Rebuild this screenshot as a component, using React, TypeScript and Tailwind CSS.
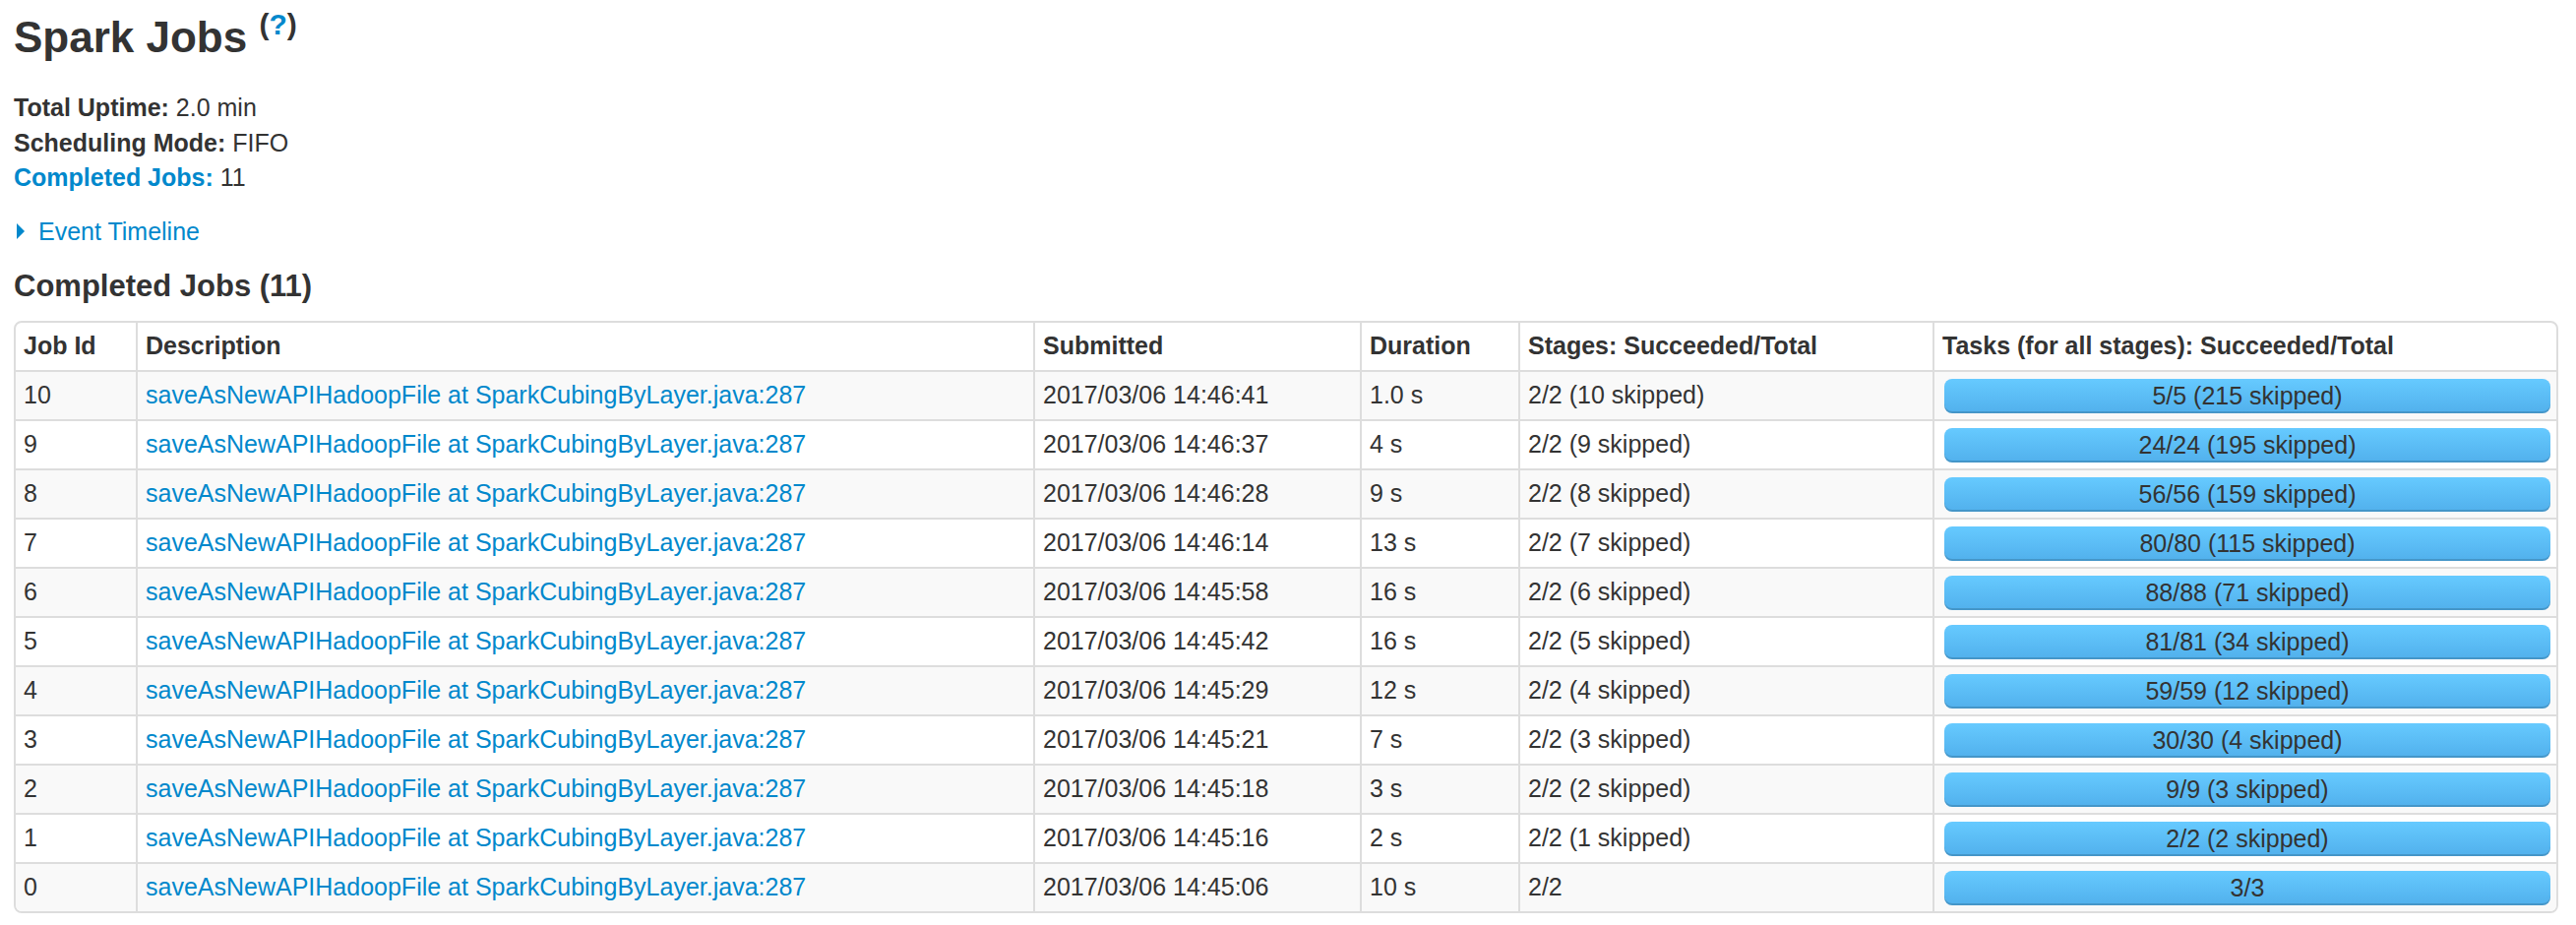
import React from "react";

type Job = {
  id: number;
  submitted: string;
  duration: string;
  stages: string;
  tasks: string;
};

const jobs: Job[] = [
  { id: 10, submitted: "2017/03/06 14:46:41", duration: "1.0 s", stages: "2/2 (10 skipped)", tasks: "5/5 (215 skipped)" },
  { id: 9, submitted: "2017/03/06 14:46:37", duration: "4 s", stages: "2/2 (9 skipped)", tasks: "24/24 (195 skipped)" },
  { id: 8, submitted: "2017/03/06 14:46:28", duration: "9 s", stages: "2/2 (8 skipped)", tasks: "56/56 (159 skipped)" },
  { id: 7, submitted: "2017/03/06 14:46:14", duration: "13 s", stages: "2/2 (7 skipped)", tasks: "80/80 (115 skipped)" },
  { id: 6, submitted: "2017/03/06 14:45:58", duration: "16 s", stages: "2/2 (6 skipped)", tasks: "88/88 (71 skipped)" },
  { id: 5, submitted: "2017/03/06 14:45:42", duration: "16 s", stages: "2/2 (5 skipped)", tasks: "81/81 (34 skipped)" },
  { id: 4, submitted: "2017/03/06 14:45:29", duration: "12 s", stages: "2/2 (4 skipped)", tasks: "59/59 (12 skipped)" },
  { id: 3, submitted: "2017/03/06 14:45:21", duration: "7 s", stages: "2/2 (3 skipped)", tasks: "30/30 (4 skipped)" },
  { id: 2, submitted: "2017/03/06 14:45:18", duration: "3 s", stages: "2/2 (2 skipped)", tasks: "9/9 (3 skipped)" },
  { id: 1, submitted: "2017/03/06 14:45:16", duration: "2 s", stages: "2/2 (1 skipped)", tasks: "2/2 (2 skipped)" },
  { id: 0, submitted: "2017/03/06 14:45:06", duration: "10 s", stages: "2/2", tasks: "3/3" },
];

function ProgressBar({ label }: { label: string }) {
  return (
    <div className="h-[35px] rounded-[8px] bg-gradient-to-b from-[#66caff] to-[#51b0ec] shadow-[inset_0_-2px_0_rgba(0,0,0,0.15)] text-center leading-[35px]">
      {label}
    </div>
  );
}

export default function App() {
  const th = "h-[48px] px-[8px] py-0 text-left font-bold align-middle";
  const td = "h-[50px] px-[8px] py-0 border-t-2 border-[#dddddd] align-middle whitespace-nowrap";

  return (
    <div
      className="min-h-screen w-full bg-white text-[#333333] pl-[14px] pr-[18px] pb-[12px]"
      style={{ fontFamily: '"Liberation Sans", Arial, sans-serif' }}
    >
      <h3 className="mt-[16px] text-[44px] leading-[44px] font-bold">
        Spark Jobs{" "}
        <span className="text-[30px] leading-[0] align-[18px]">
          (<a href="#" className="text-[#0088cc]">?</a>)
        </span>
      </h3>

      <ul className="mt-[32px] text-[25px] leading-[35.5px]">
        <li>
          <strong>Total Uptime:</strong> 2.0 min
        </li>
        <li>
          <strong>Scheduling Mode:</strong> FIFO
        </li>
        <li>
          <a href="#" className="text-[#0088cc] font-bold">Completed Jobs:</a> 11
        </li>
      </ul>

      <div className="mt-[19px] flex items-center text-[25px] leading-[35.5px] text-[#0088cc]">
        <svg width="8" height="16" viewBox="0 0 8 16" className="ml-[3px] mr-[14px]">
          <polygon points="0,0 8,8 0,16" fill="#0088cc" />
        </svg>
        <a href="#">Event Timeline</a>
      </div>

      <h4 className="mt-[22px] text-[31px] leading-[31px] font-bold">Completed Jobs (11)</h4>

      <div className="mt-[20px] border-2 border-[#dddddd] rounded-[8px] overflow-hidden">
        <table className="w-full table-fixed border-separate border-spacing-0 text-[25px]">
          <thead>
            <tr>
              <th className={`${th} w-[122px]`}>Job Id</th>
              <th className={`${th} w-[912px] border-l-2 border-[#dddddd]`}>Description</th>
              <th className={`${th} w-[332px] border-l-2 border-[#dddddd]`}>Submitted</th>
              <th className={`${th} w-[161px] border-l-2 border-[#dddddd]`}>Duration</th>
              <th className={`${th} w-[421px] border-l-2 border-[#dddddd]`}>Stages: Succeeded/Total</th>
              <th className={`${th} border-l-2 border-[#dddddd]`}>Tasks (for all stages): Succeeded/Total</th>
            </tr>
          </thead>
          <tbody>
            {jobs.map((job, i) => (
              <tr key={job.id} className={i % 2 === 0 ? "bg-[#f9f9f9]" : "bg-white"}>
                <td className={td}>{job.id}</td>
                <td className={`${td} border-l-2`}>
                  <a href="#" className="text-[#0088cc]">
                    saveAsNewAPIHadoopFile at SparkCubingByLayer.java:287
                  </a>
                </td>
                <td className={`${td} border-l-2`}>{job.submitted}</td>
                <td className={`${td} border-l-2`}>{job.duration}</td>
                <td className={`${td} border-l-2`}>{job.stages}</td>
                <td className={`${td} border-l-2 pl-[10px] pr-[6px]`}>
                  <ProgressBar label={job.tasks} />
                </td>
              </tr>
            ))}
          </tbody>
        </table>
      </div>
    </div>
  );
}
